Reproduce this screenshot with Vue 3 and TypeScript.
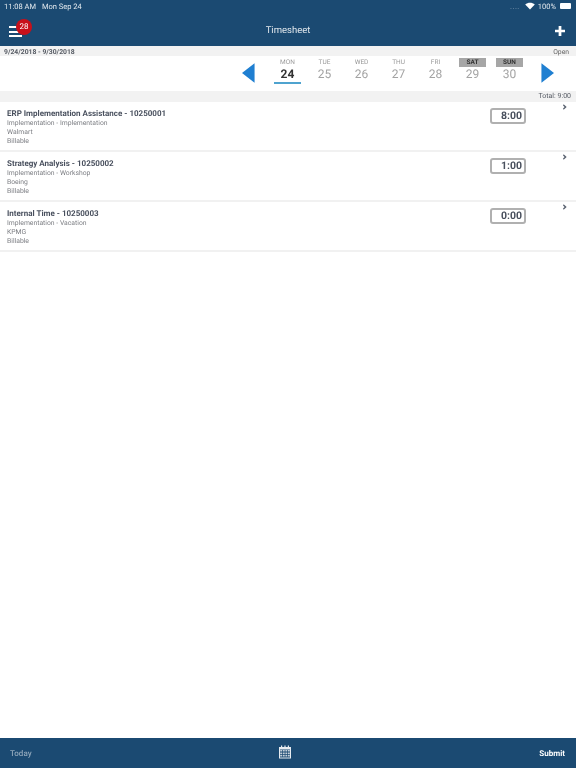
<script setup lang="ts">
interface Day {
  name: string
  date: number
  weekend?: boolean
  active?: boolean
}

interface Entry {
  title: string
  type: string
  client: string
  billing: string
  hours: string
}

const days: Day[] = [
  { name: 'MON', date: 24, active: true },
  { name: 'TUE', date: 25 },
  { name: 'WED', date: 26 },
  { name: 'THU', date: 27 },
  { name: 'FRI', date: 28 },
  { name: 'SAT', date: 29, weekend: true },
  { name: 'SUN', date: 30, weekend: true },
]

const entries: Entry[] = [
  { title: 'ERP Implementation Assistance - 10250001', type: 'Implementation - Implementation', client: 'Walmart', billing: 'Billable', hours: '8:00' },
  { title: 'Strategy Analysis - 10250002', type: 'Implementation - Workshop', client: 'Boeing', billing: 'Billable', hours: '1:00' },
  { title: 'Internal Time - 10250003', type: 'Implementation - Vacation', client: 'KPMG', billing: 'Billable', hours: '0:00' },
]
</script>

<template>
  <div class="screen">
    <header class="top">
      <div class="status">
        <div class="status-left">
          <span>11:08 AM</span>
          <span>Mon Sep 24</span>
        </div>
        <div class="status-right">
          <span class="signal">....</span>
          <svg width="10" height="8" viewBox="0 0 10 8">
            <path d="M5 7.6 0.2 2.6C2.9 0 7.1 0 9.8 2.6Z" fill="#fff" />
          </svg>
          <span>100%</span>
          <span class="battery"></span>
        </div>
      </div>
      <div class="nav">
        <div class="menu">
          <span></span><span></span><span></span>
          <b class="badge">28</b>
        </div>
        <div class="title">Timesheet</div>
        <svg class="plus" width="10" height="10" viewBox="0 0 11 11">
          <path d="M4 0h3v4h4v3H7v4H4V7H0V4h4z" fill="#fff" />
        </svg>
      </div>
    </header>

    <div class="range">
      <span class="dates">9/24/2018 - 9/30/2018</span>
      <span class="state">Open</span>
    </div>

    <div class="week">
      <svg class="arrow" width="13" height="20" viewBox="0 0 14 21">
        <path d="M13.5 0V21L0 10.5Z" fill="#1f7fd1" />
      </svg>
      <div class="days">
        <div v-for="d in days" :key="d.name" class="day" :class="{ active: d.active }">
          <div class="day-name" :class="{ weekend: d.weekend }">{{ d.name }}</div>
          <div class="day-num">{{ d.date }}</div>
        </div>
      </div>
      <svg class="arrow" width="13" height="20" viewBox="0 0 14 21">
        <path d="M0.5 0V21L14 10.5Z" fill="#1f7fd1" />
      </svg>
    </div>

    <div class="total">Total: 9:00</div>

    <div class="entries">
      <div v-for="e in entries" :key="e.title" class="entry">
        <div class="info">
          <div class="entry-title">{{ e.title }}</div>
          <div>{{ e.type }}</div>
          <div>{{ e.client }}</div>
          <div>{{ e.billing }}</div>
        </div>
        <div class="hours">{{ e.hours }}</div>
        <svg class="chev" width="4" height="6" viewBox="0 0 5 7">
          <path d="M0.8 0 4.6 3.5 0.8 7 0 5.4 2 3.5 0 1.6Z" fill="#5a6270" />
        </svg>
      </div>
    </div>

    <footer class="bottom">
      <span class="today">Today</span>
      <svg class="cal" width="12" height="14" viewBox="0 0 12 13">
        <path d="M0 1.5h12V13H0Z" fill="#e6ebf0" />
        <path d="M1 4h10v8H1Z" fill="#1b4a72" />
        <path d="M1.2 4.5h2v1.6h-2ZM3.9 4.5h1.8v1.6H3.9ZM6.4 4.5h1.8v1.6H6.4ZM8.9 4.5h1.9v1.6H8.9ZM1.2 6.9h2v1.6h-2ZM3.9 6.9h1.8v1.6H3.9ZM6.4 6.9h1.8v1.6H6.4ZM8.9 6.9h1.9v1.6H8.9ZM1.2 9.3h2V11h-2ZM3.9 9.3h1.8V11H3.9ZM6.4 9.3h1.8V11H6.4ZM8.9 9.3h1.9V11H8.9Z" fill="#c5d0da" />
        <path d="M2 0h1.2v3H2ZM5.4 0h1.2v3H5.4ZM8.8 0H10v3H8.8Z" fill="#e6ebf0" />
      </svg>
      <span class="submit">Submit</span>
    </footer>
  </div>
</template>

<style>
html,
body {
  margin: 0;
  background: #fff;
}
</style>

<style scoped>
.screen {
  width: 576px;
  height: 768px;
  display: flex;
  flex-direction: column;
  overflow: hidden;
  font-family: Roboto, "Liberation Sans", sans-serif;
  color: #4a4f58;
  text-rendering: geometricPrecision;
  will-change: transform;
}

.top {
  height: 46px;
  background: #1b4a72;
  color: #fff;
  flex-shrink: 0;
}

.status {
  height: 12px;
  padding: 0 4px;
  display: flex;
  justify-content: space-between;
  align-items: center;
  font-size: 7.5px;
  color: #e4eaef;
}

.status-left {
  display: flex;
  gap: 6px;
}

.status-right {
  display: flex;
  align-items: center;
  gap: 3px;
}

.signal {
  color: #7f9ab2;
  letter-spacing: 0.5px;
  margin-right: 2px;
}

.battery {
  width: 11px;
  height: 6px;
  background: #fff;
  border-radius: 1px;
  margin: 0 1px;
}

.nav {
  height: 34px;
  padding: 3px 11px 0 9px;
  box-sizing: border-box;
  display: flex;
  align-items: center;
  justify-content: space-between;
  position: relative;
}

.menu {
  width: 13px;
  display: flex;
  flex-direction: column;
  gap: 2.5px;
  position: relative;
  margin-top: 2px;
}

.menu span {
  height: 2px;
  background: #fff;
}

.badge {
  position: absolute;
  left: 7px;
  top: -7px;
  width: 16px;
  height: 16px;
  border-radius: 50%;
  background: #c8101a;
  font-size: 8px;
  font-weight: 400;
  line-height: 16px;
  text-align: center;
}

.title {
  position: absolute;
  left: 0;
  right: 0;
  text-align: center;
  font-size: 9.5px;
  color: #dfe6ec;
}

.range {
  height: 10px;
  padding: 2px 7px 0 4px;
  box-sizing: border-box;
  background: #f2f2f2;
  display: flex;
  justify-content: space-between;
  align-items: center;
  font-size: 6.8px;
  flex-shrink: 0;
}

.dates {
  font-weight: 700;
  color: #555a63;
}

.state {
  color: #666;
}

.week {
  height: 35px;
  padding: 0 22px 0 242px;
  display: flex;
  align-items: center;
  flex-shrink: 0;
  justify-content: space-between;
}

.arrow {
  margin-top: -1px;
}

.days {
  display: flex;
  gap: 10px;
  margin: -5px 0 0 1px;
}

.day {
  width: 27px;
  height: 24px;
  text-align: center;
  border-bottom: 2px solid transparent;
}

.day.active {
  border-bottom-color: #4fa3cf;
}

.day-name {
  height: 9px;
  font-size: 6.5px;
  line-height: 9px;
  color: #9a9a9a;
}

.day-name.weekend {
  background: #a6a6a6;
  color: #333;
  font-weight: 700;
}

.day-num {
  font-size: 12px;
  line-height: 14px;
  color: #a3a3a3;
}

.day.active .day-num {
  color: #333;
  font-weight: 700;
}

.total {
  height: 11px;
  background: #f2f2f2;
  text-align: right;
  padding-right: 5px;
  font-size: 7px;
  line-height: 10px;
  color: #555a63;
  flex-shrink: 0;
}

.entries {
  flex: 1;
}

.entry {
  height: 50px;
  box-sizing: border-box;
  border-bottom: 2px solid #f1f1f1;
  display: flex;
  position: relative;
  padding: 7px 0 0 7px;
}

.info {
  flex: 1;
  font-size: 6.8px;
  line-height: 9px;
  color: #7d7f84;
}

.entry-title {
  font-size: 8px;
  font-weight: 700;
  color: #49505e;
  line-height: 10px;
}

.hours {
  width: 30px;
  height: 12px;
  margin-top: -1px;
  border: 2px solid #b0b0b0;
  border-radius: 3px;
  font-size: 10.5px;
  font-weight: 700;
  color: #49505e;
  text-align: right;
  line-height: 12px;
  padding-right: 2px;
  margin-right: 50px;
}

.chev {
  position: absolute;
  right: 9px;
  top: 2px;
}

.bottom {
  height: 30px;
  background: #1b4a72;
  display: flex;
  align-items: center;
  justify-content: space-between;
  padding: 0 11px 0 10px;
  position: relative;
  flex-shrink: 0;
  font-size: 8px;
}

.today {
  color: #8ea6ba;
  font-weight: 500;
}

.cal {
  position: absolute;
  left: 279px;
  top: 7px;
}

.submit {
  color: #fff;
  font-weight: 700;
}
</style>
